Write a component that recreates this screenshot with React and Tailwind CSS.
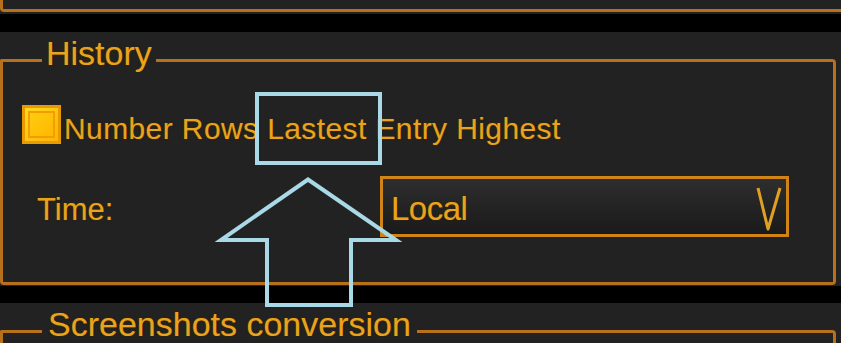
import React from "react";

// gold-on-charcoal settings panel, with a blue call-out drawn over it
const glow = "[text-shadow:0_0_1px_#5c3c00,0_0_2px_#3a2600]";

const GroupHeader = ({ title, pad }) => (
  <div className="flex h-[41px]">
    <div className="w-[42px] mt-[27px] border-t-[3px] border-l-[3px] border-[#b8711a] rounded-tl-[2px]" />
    <div className={`pt-[2px] ${pad} text-[34px] leading-[39px] text-[#e8a41e] ${glow} whitespace-nowrap`}>
      {title}
    </div>
    <div className="flex-1 mt-[27px] border-t-[3px] border-r-[3px] border-[#b8711a] rounded-tr-[4px]" />
  </div>
);

const Checkbox = () => (
  <div className="w-[39px] h-[39px] shrink-0 border-[3px] border-[#e89a00] bg-linear-to-br from-[#ffd81f] to-[#ffb400] p-[3px]">
    <div className="w-full h-full border-[2px] border-[#f29e00] bg-linear-to-br from-[#ffcc10] to-[#ffb800]" />
  </div>
);

export default function App() {
  return (
    <div className="relative w-[841px] h-[343px] overflow-hidden bg-black font-['Liberation_Sans',Arial,sans-serif]">
      {/* previous group, cut off at the top */}
      <div className="bg-[#222222] h-[14px]">
        <div className="h-[12px] border-l-[3px] border-b-[3px] border-[#b8711a] rounded-bl-[4px]" />
      </div>

      {/* History */}
      <div className="mt-[18px] bg-[#222222] pr-[5px] pb-[1px]">
        <GroupHeader title="History" pad="px-[4px]" />
        <div className="h-[212px] border-x-[3px] border-b-[3px] border-[#b8711a] rounded-b-[4px]">
          <div className="flex items-start pt-[32px] pl-[19px]">
            <Checkbox />
            <span className={`ml-[3px] mt-[7px] text-[30px] leading-[34px] tracking-[0.4px] text-[#e8a41e] ${glow} whitespace-nowrap`}>
              Number Rows Lastest Entry Highest
            </span>
          </div>
          <div className="flex items-start mt-[30px] pl-[34px]">
            <span className={`w-[343px] mt-[16px] text-[31px] leading-[36px] text-[#e8a41e] ${glow}`}>
              Time:
            </span>
            <div className="w-[409px] h-[61px] border-[3px] border-[#d08418] bg-linear-to-b from-[#2e2e2e] to-[#1a1a1a] flex items-start justify-between pl-[8px] pr-[4px]">
              <span className={`mt-[11px] text-[33px] leading-[38px] tracking-[-0.5px] text-[#e8a41e] ${glow}`}>
                Local
              </span>
              <svg width="26" height="44" viewBox="0 0 26 44" className="mt-[8px]">
                <polyline
                  points="2,1 12,42 24,1"
                  fill="none"
                  stroke="#e0a020"
                  strokeWidth="3"
                  strokeLinejoin="round"
                />
              </svg>
            </div>
          </div>
        </div>
      </div>

      {/* Screenshots conversion */}
      <div className="mt-[17px] bg-[#222222] pr-[5px] h-[60px]">
        <GroupHeader title="Screenshots conversion" pad="px-[6px]" />
        <div className="h-[40px] border-x-[3px] border-[#b8711a]" />
      </div>

      {/* call-out annotation */}
      <svg className="absolute inset-0 pointer-events-none" width="841" height="343" viewBox="0 0 841 343">
        <rect x="257" y="94" width="123" height="69" fill="none" stroke="#a9d8e6" strokeWidth="4" />
        <polygon
          points="308,179.5 396,240 351,240 351,305 267,305 267,240 221,240"
          fill="none"
          stroke="#a9d8e6"
          strokeWidth="4"
        />
      </svg>
    </div>
  );
}
